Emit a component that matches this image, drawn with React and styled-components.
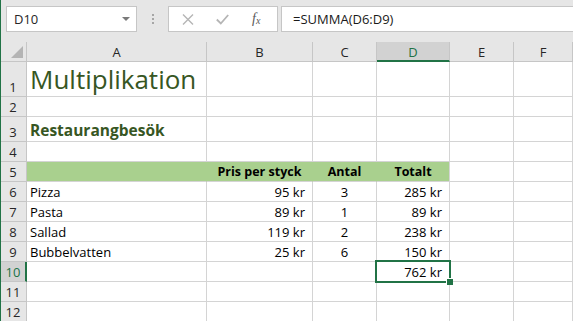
import React from "react";
import styled, { createGlobalStyle, css } from "styled-components";

const GlobalStyle = createGlobalStyle`
  html, body { margin: 0; padding: 0; overflow: hidden; background: #e6e6e6; }
  body { font-family: "Open Sans", "Liberation Sans", sans-serif; }
  * { box-sizing: border-box; }
`;

const Window = styled.div`
  width: 573px;
  height: 321px;
  overflow: hidden;
  background: #e6e6e6;
  border-left: 1px solid #217346;
  display: flex;
  flex-direction: column;
`;

const Toolbar = styled.div`
  height: 42px;
  flex: none;
  display: flex;
  align-items: flex-start;
  padding: 6px 0 0 5px;
`;

const NameBox = styled.div`
  width: 131px;
  height: 26px;
  background: #fff;
  border: 1px solid #c6c6c6;
  display: flex;
  align-items: center;
  justify-content: space-between;
  padding: 0 6px 0 7px;
  font-size: 13px;
  color: #262626;
`;

const Grip = styled.div`
  width: 31px;
  height: 26px;
  display: flex;
  flex-direction: column;
  align-items: center;
  justify-content: center;
  gap: 2px;
  span {
    width: 2px;
    height: 2px;
    background: #a6a6a6;
  }
`;

const FxBox = styled.div`
  width: 110px;
  height: 26px;
  background: #fff;
  border: 1px solid #c6c6c6;
  display: flex;
  align-items: center;
  padding: 0 0 0 13px;
  gap: 22px;
`;

const FxLabel = styled.span`
  font-family: "Liberation Serif", serif;
  font-style: italic;
  font-size: 14px;
  color: #595959;
  margin-left: 1px;
  sub {
    font-size: 10px;
    vertical-align: baseline;
    position: relative;
    top: 1px;
  }
`;

const FormulaInput = styled.div`
  flex: 1;
  height: 26px;
  margin-left: 3px;
  background: #fff;
  border: 1px solid #c6c6c6;
  border-right: none;
  display: flex;
  align-items: center;
  padding-left: 11px;
  font-size: 13px;
  color: #1a1a1a;
`;

const Sheet = styled.div`
  flex: 1;
  display: grid;
  grid-template-columns: 26px 180px 106px 64px 73px 64px 1fr;
  grid-template-rows: 20px 35px 20px 25px repeat(9, 20px);
  background: #fff;
`;

const Corner = styled.div`
  background: #e6e6e6;
  border-right: 1px solid #c6c6c6;
  border-bottom: 1px solid #c6c6c6;
  position: relative;
  svg { position: absolute; right: 3px; bottom: 3px; }
`;

const ColHead = styled.div`
  background: ${(p) => (p.$active ? "#d2d2d2" : "#e6e6e6")};
  border-right: 1px solid #c6c6c6;
  border-bottom: ${(p) => (p.$active ? "2px solid #217346" : "1px solid #c6c6c6")};
  display: flex;
  align-items: center;
  justify-content: center;
  font-size: 13px;
  color: ${(p) => (p.$active ? "#217346" : "#262626")};
  line-height: 1;
  padding-top: 2px;
`;

const RowHead = styled.div`
  background: ${(p) => (p.$active ? "#d2d2d2" : "#e6e6e6")};
  border-right: ${(p) => (p.$active ? "2px solid #217346" : "1px solid #c6c6c6")};
  border-bottom: 1px solid #c6c6c6;
  display: flex;
  align-items: flex-end;
  justify-content: center;
  font-size: 13px;
  line-height: 18px;
  color: ${(p) => (p.$active ? "#217346" : "#262626")};
  padding-right: ${(p) => (p.$active ? "0" : "1px")};
`;

const Cell = styled.div`
  position: relative;
  background: ${(p) => (p.$fill ? "#a9d08e" : "#fff")};
  border-right: 1px solid ${(p) => (p.$fill && !p.$lastFill ? "#a9d08e" : "#d4d4d4")};
  border-bottom: 1px solid #d4d4d4;
  display: flex;
  align-items: flex-end;
  justify-content: ${(p) =>
    p.$align === "right" ? "flex-end" : p.$align === "center" ? "center" : "flex-start"};
  padding: ${(p) => (p.$align === "right" ? "0 7px 0 0" : p.$align === "center" ? "0" : "0 0 0 3px")};
  font-size: 13px;
  line-height: 18px;
  color: #000;
  white-space: nowrap;
  font-weight: ${(p) => (p.$bold ? 700 : 400)};
  ${(p) => p.$bold && css`font-size: 12.5px;`}
`;

const Title = styled.span`
  font-size: 26px;
  line-height: 32px;
  font-weight: 400;
  color: #375623;
  margin-bottom: 1px;
`;

const Subtitle = styled.span`
  font-size: 15.5px;
  line-height: 22px;
  font-weight: 700;
  color: #375623;
`;

const Selection = styled.div`
  position: absolute;
  left: -2px;
  top: -2px;
  width: 76px;
  height: 23px;
  border: 2px solid #217346;
  z-index: 2;
  pointer-events: none;
`;

const Handle = styled.div`
  position: absolute;
  right: -4px;
  bottom: -4px;
  width: 7px;
  height: 7px;
  background: #217346;
  border: 1px solid #fff;
  border-right: none;
  border-bottom: none;
`;

const COLS = ["A", "B", "C", "D", "E", "F"];
const ALIGN = ["left", "right", "center", "right", "left", "left"];

const rows = [
  { n: 1, cells: [{ title: "Multiplikation" }] },
  { n: 2, cells: [] },
  { n: 3, cells: [{ sub: "Restaurangbesök" }] },
  { n: 4, cells: [] },
  { n: 5, header: true, cells: ["", "Pris per styck", "Antal", "Totalt"] },
  { n: 6, cells: ["Pizza", "95 kr", "3", "285 kr"] },
  { n: 7, cells: ["Pasta", "89 kr", "1", "89 kr"] },
  { n: 8, cells: ["Sallad", "119 kr", "2", "238 kr"] },
  { n: 9, cells: ["Bubbelvatten", "25 kr", "6", "150 kr"] },
  { n: 10, cells: ["", "", "", "762 kr"], selected: 3 },
  { n: 11, cells: [] },
  { n: 12, cells: [] },
];

function renderContent(v) {
  if (v && typeof v === "object") {
    if (v.title) return <Title>{v.title}</Title>;
    if (v.sub) return <Subtitle>{v.sub}</Subtitle>;
  }
  return v || null;
}

export default function App() {
  return (
    <>
      <GlobalStyle />
      <Window>
        <Toolbar>
          <NameBox>
            <span>D10</span>
            <svg width="8" height="4" viewBox="0 0 8 4">
              <path d="M0 0 H8 L4 4 Z" fill="#7a7a7a" />
            </svg>
          </NameBox>
          <Grip>
            <span />
            <span />
            <span />
          </Grip>
          <FxBox>
            <svg width="12" height="11" viewBox="0 0 12 11">
              <path d="M1 0.5 L11 10.5 M11 0.5 L1 10.5" stroke="#b5b5b5" strokeWidth="1.4" fill="none" />
            </svg>
            <svg width="13" height="11" viewBox="0 0 13 11">
              <path d="M0.8 5.5 L4.8 9.5 L12.2 1" stroke="#b5b5b5" strokeWidth="1.8" fill="none" />
            </svg>
            <FxLabel>
              f<sub>x</sub>
            </FxLabel>
          </FxBox>
          <FormulaInput>=SUMMA(D6:D9)</FormulaInput>
        </Toolbar>
        <Sheet>
          <Corner>
            <svg width="12" height="12" viewBox="0 0 12 12">
              <path d="M12 0 V12 H0 Z" fill="#b4b4b4" />
            </svg>
          </Corner>
          {COLS.map((c) => (
            <ColHead key={c} $active={c === "D"}>
              {c}
            </ColHead>
          ))}
          {rows.map((r) => (
            <React.Fragment key={r.n}>
              <RowHead $active={r.n === 10}>{r.n}</RowHead>
              {COLS.map((c, i) => {
                const v = r.cells[i];
                const fill = r.header && i < 4;
                return (
                  <Cell
                    key={c}
                    $fill={fill}
                    $lastFill={r.header && i === 3}
                    $bold={r.header}
                    $align={r.header ? (i === 0 ? "left" : "center") : ALIGN[i]}
                  >
                    {renderContent(v)}
                    {r.selected === i && (
                      <Selection>
                        <Handle />
                      </Selection>
                    )}
                  </Cell>
                );
              })}
            </React.Fragment>
          ))}
        </Sheet>
      </Window>
    </>
  );
}
